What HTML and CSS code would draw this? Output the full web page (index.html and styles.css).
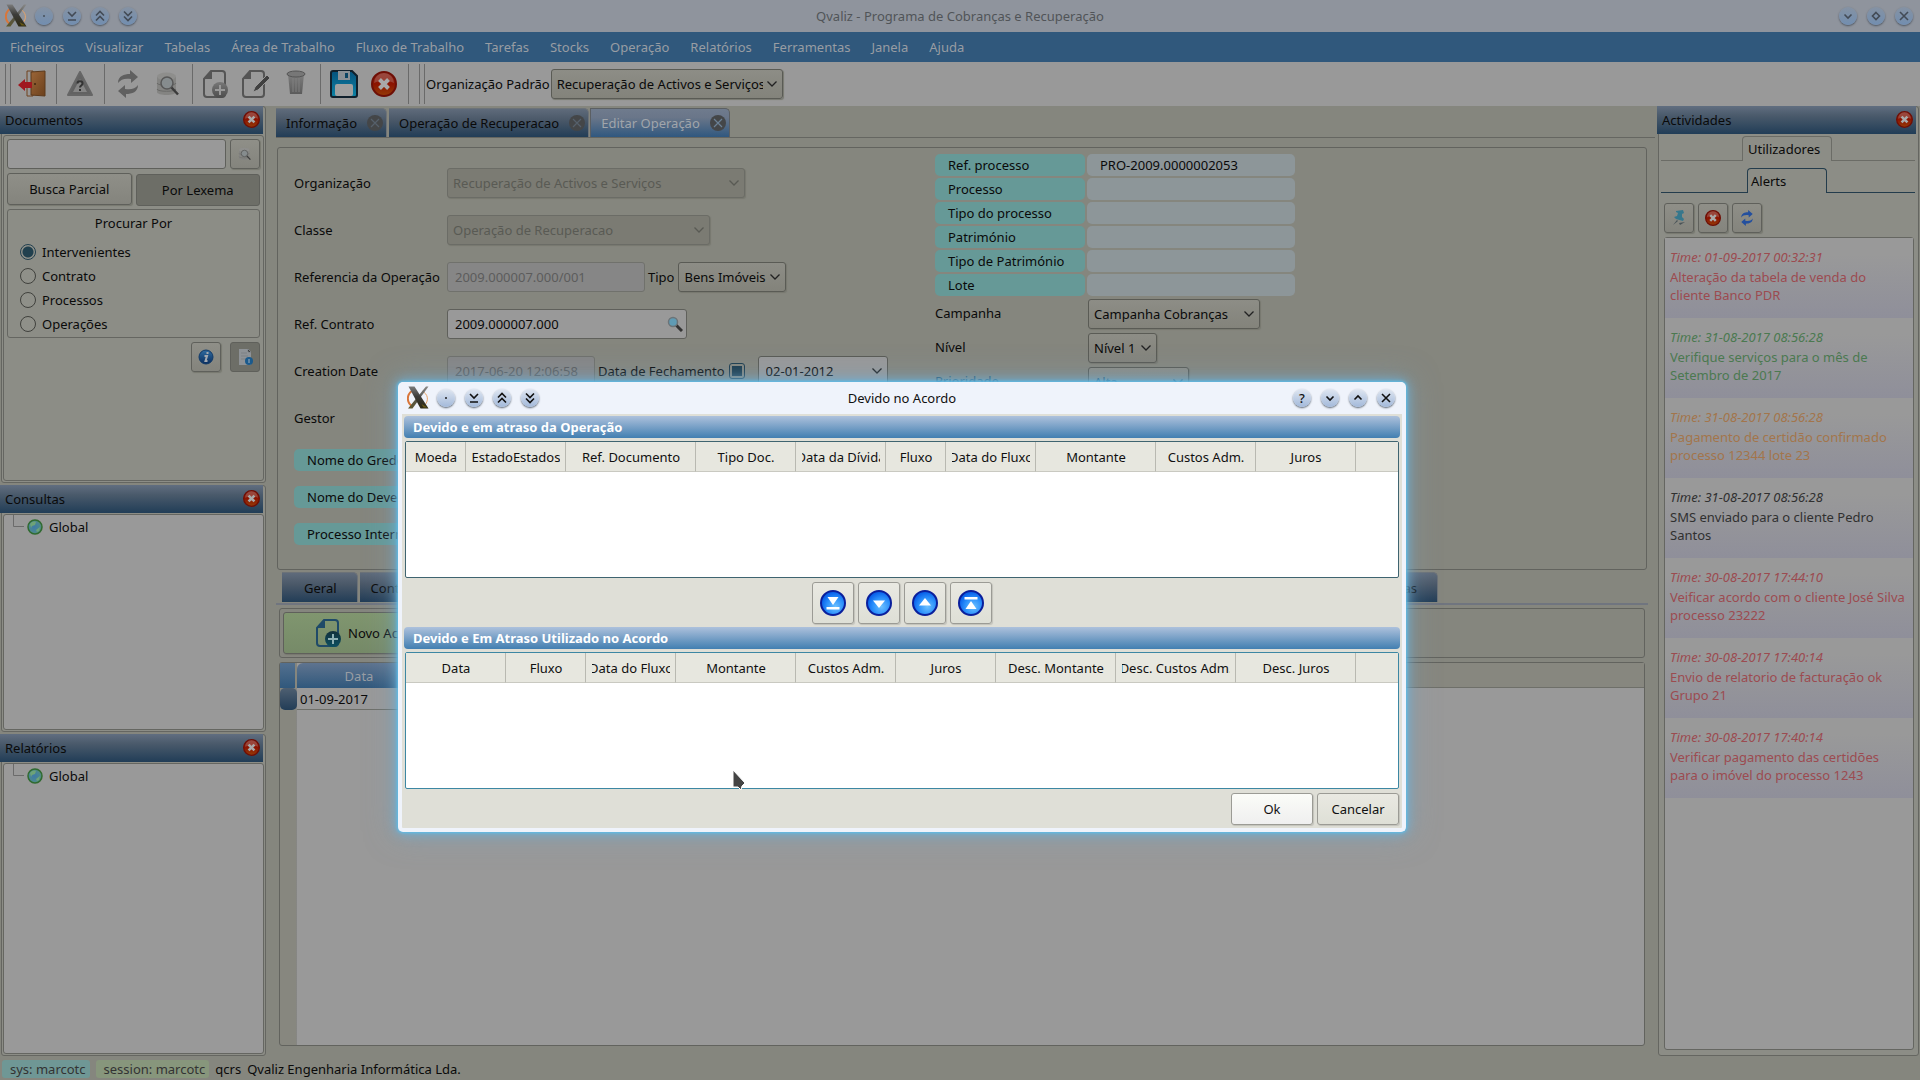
FILE: index.html
```html
<!DOCTYPE html>
<html lang="pt">
<head>
<meta charset="utf-8">
<title>Qvaliz - Programa de Cobranças e Recuperação</title>
<link rel="stylesheet" href="styles.css">
</head>
<body>
<svg class="sprite" width="0" height="0" aria-hidden="true">
  <defs>
    <linearGradient id="g-x" x1="0" y1="0" x2="0" y2="1"><stop offset="0" stop-color="#7b7b7b"/><stop offset=".45" stop-color="#3c3c3a"/><stop offset="1" stop-color="#2e2a14"/></linearGradient>
    <linearGradient id="g-x2" x1="1" y1="0" x2="0" y2="1"><stop offset="0" stop-color="#8b8b8b"/><stop offset=".5" stop-color="#55554f"/><stop offset="1" stop-color="#5e5628"/></linearGradient>
    <linearGradient id="g-door" x1="0" y1="0" x2="1" y2="1"><stop offset="0" stop-color="#9c6638"/><stop offset="1" stop-color="#6b401c"/></linearGradient>
    <linearGradient id="g-red" x1="0" y1="0" x2="0" y2="1"><stop offset="0" stop-color="#8a2a20"/><stop offset=".5" stop-color="#8c1300"/><stop offset="1" stop-color="#943c08"/></linearGradient>
    <linearGradient id="g-grey" x1="0" y1="0" x2="0" y2="1"><stop offset="0" stop-color="#777"/><stop offset="1" stop-color="#4c4c4c"/></linearGradient>
    <linearGradient id="g-save" x1="0" y1="0" x2="0" y2="1"><stop offset="0" stop-color="#05517c"/><stop offset="1" stop-color="#0d84a6"/></linearGradient>
    <linearGradient id="g-info" x1="0" y1="0" x2="0" y2="1"><stop offset="0" stop-color="#2f6ba0"/><stop offset="1" stop-color="#0a2d5e"/></linearGradient>
    <radialGradient id="g-globe" cx=".45" cy=".5" r=".6"><stop offset="0" stop-color="#3f7aa6"/><stop offset=".6" stop-color="#4a8692"/><stop offset="1" stop-color="#5b9160"/></radialGradient>
    <radialGradient id="g-move" cx=".6" cy=".65" r=".6"><stop offset="0" stop-color="#6cc0ff"/><stop offset=".6" stop-color="#2a8ffb"/><stop offset="1" stop-color="#0a62ea"/></radialGradient>
    <linearGradient id="g-dark" x1="0" y1="0" x2="0" y2="1"><stop offset="0" stop-color="#12303c"/><stop offset="1" stop-color="#0d5060"/></linearGradient>
  </defs>
  <symbol id="i-app" viewBox="0 0 22 24">
    <path d="M5 5C-1 9 0 17 5 20" fill="none" stroke="#d9763a" stroke-width="2"/>
    <path d="M15 5c6 3 7 9 3 14" fill="none" stroke="#e9a468" stroke-width="1"/>
    <path d="M19 0.500h2.500L5.500 22.500H1z" fill="url(#g-x2)"/>
    <path d="M1.500 0.500h6L21.500 22.500h-8z" fill="url(#g-x)"/>
    <path d="M14.500 18l2 3.500h4z" fill="#8a7410" opacity=".6"/>
  </symbol>
  <symbol id="i-dot" viewBox="0 0 18 18"><rect x="8" y="8" width="2" height="2" fill="currentColor" opacity=".7"/></symbol>
  <symbol id="i-bottom" viewBox="0 0 18 18"><path d="M5 5l4 4 4-4M5 13h8" class="ln"/></symbol>
  <symbol id="i-up2" viewBox="0 0 18 18"><path d="M5 8.500l4-4 4 4M5 13.500l4-4 4 4" class="ln"/></symbol>
  <symbol id="i-down2" viewBox="0 0 18 18"><path d="M5 4.500l4 4 4-4M5 9.500l4 4 4-4" class="ln"/></symbol>
  <symbol id="i-down" viewBox="0 0 18 18"><path d="M5.500 7.500L9 11l3.500-3.500" class="ln"/></symbol>
  <symbol id="i-up" viewBox="0 0 18 18"><path d="M5.500 10.500L9 7l3.500 3.500" class="ln"/></symbol>
  <symbol id="i-diamond" viewBox="0 0 18 18"><path d="M9 5.500L12.500 9 9 12.500 5.500 9z" class="ln"/></symbol>
  <symbol id="i-close" viewBox="0 0 18 18"><path d="M5 5l8 8M13 5l-8 8" class="ln"/></symbol>
  <symbol id="i-chev" viewBox="0 0 10 6"><path d="M.5.5L5 5 9.500.5" fill="none" stroke="currentColor" stroke-width="1.300"/></symbol>
  <symbol id="i-redx" viewBox="0 0 26 26">
    <circle cx="13" cy="13" r="12" fill="url(#g-red)" stroke="#6e0f06" stroke-width="2"/>
    <path d="M3 12a10 10 0 0 1 20 0c-6-3-14-3-20 0z" fill="#a86a62" opacity=".5"/>
    <path d="M8.500 8.500l9 9M17.500 8.500l-9 9" stroke="#a9a9a9" stroke-width="4"/>
  </symbol>
  <symbol id="i-tabx" viewBox="0 0 16 16"><circle cx="8" cy="8" r="8" fill="#444648"/><path d="M4 4l8 8M12 4l-8 8" stroke="currentColor" stroke-width="1.200"/></symbol>
  <symbol id="i-globe" viewBox="0 0 16 16"><circle cx="8" cy="8" r="7" fill="url(#g-globe)" stroke="#2f6a30" stroke-width="1.500"/><path d="M3 5c2-3 5-3 6-2L8 6 5 7 4 9zM9 11l4-3-1 4-2 1z" fill="#6ea377"/></symbol>
  <symbol id="i-find" viewBox="0 0 24 26">
    <path d="M1 6v15c0 4 19 4 19 0V6z" fill="#848482"/><ellipse cx="10.500" cy="5.500" rx="9.500" ry="4" fill="#8e8e8c"/>
    <path d="M1 12c0 3 19 3 19 0M1 18c0 3 19 3 19 0" fill="none" stroke="#6a6a68"/>
    <circle cx="11" cy="12" r="6" fill="#868c8e" stroke="#585858" stroke-width="1.500"/><path d="M15.500 16.500l6.500 7" stroke="#3c3c3c" stroke-width="2.500"/>
  </symbol>
  <symbol id="i-doc" viewBox="0 0 26 28">
    <path d="M8 1h11a3 3 0 0 1 3 3v20a3 3 0 0 1-3 3H4a3 3 0 0 1-3-3V9z" fill="none" stroke="currentColor" stroke-width="2"/><path d="M9 1v8H1z" fill="currentColor"/>
  </symbol>
</svg>

<div class="app">
  <header class="titlebar">
    <div class="group">
      <svg class="logo"><use href="#i-app"/></svg>
      <button class="round" aria-label="Menu"><svg><use href="#i-dot"/></svg></button>
      <button class="round" aria-label="Em baixo"><svg><use href="#i-bottom"/></svg></button>
      <button class="round" aria-label="Acima"><svg><use href="#i-up2"/></svg></button>
      <button class="round" aria-label="Abaixo"><svg><use href="#i-down2"/></svg></button>
    </div>
    <h1>Qvaliz - Programa de Cobranças e Recuperação</h1>
    <div class="group end">
      <button class="round" aria-label="Minimizar"><svg><use href="#i-down"/></svg></button>
      <button class="round" aria-label="Restaurar"><svg><use href="#i-diamond"/></svg></button>
      <button class="round" aria-label="Fechar"><svg><use href="#i-close"/></svg></button>
    </div>
  </header>

  <nav class="menubar">
    <a href="#">Ficheiros</a><a href="#">Visualizar</a><a href="#">Tabelas</a><a href="#">Área de Trabalho</a><a href="#">Fluxo de Trabalho</a><a href="#">Tarefas</a><a href="#">Stocks</a><a href="#">Operação</a><a href="#">Relatórios</a><a href="#">Ferramentas</a><a href="#">Janela</a><a href="#">Ajuda</a>
  </nav>

  <div class="toolbar">
    <span class="grip"></span>
    <button aria-label="Sair"><svg width="28" height="28" viewBox="0 0 28 28"><path d="M9 1h6v25H9z" fill="#999" stroke="#70431f"/><path d="M13 2l14-1v25l-14-1z" fill="url(#g-door)" stroke="#5d3a1c"/><circle cx="17" cy="14" r="1" fill="#3c2410"/><path d="M0 15l7-6v3h7v6H7v3z" fill="#a01820"/></svg></button>
    <span class="sep"></span>
    <button aria-label="Aviso"><svg width="26" height="26" viewBox="0 0 26 26"><path d="M13 1l12 23H1z" fill="#626262" stroke="#666" stroke-width="2" stroke-linejoin="round"/><path d="M13 8l7 13H6z" fill="#858585"/><path d="M10.500 12.500c0-3 5-3 5 0 0 2-2.500 2-2.500 4M13 18v2" fill="none" stroke="#333" stroke-width="2"/></svg></button>
    <span class="sep"></span>
    <button aria-label="Actualizar"><svg width="22" height="28" viewBox="0 0 22 28"><path d="M1 13C1 6 7 4 13 4V0l8 7-7 6V9C8 8 4 9 1 13zM21 15c0 7-6 9-12 9v4l-8-7 7-6v4c6 1 10 0 13-4z" fill="#606060"/></svg></button>
    <button aria-label="Pesquisar"><svg width="24" height="26"><use href="#i-find"/></svg></button>
    <span class="sep"></span>
    <button aria-label="Novo"><svg width="26" height="28" viewBox="0 0 26 28" color="#555"><use href="#i-doc"/><circle cx="17" cy="20" r="8" fill="url(#g-grey)"/><path d="M17 15v10M12 20h10" stroke="#999" stroke-width="2"/></svg></button>
    <button aria-label="Editar"><svg width="28" height="28" viewBox="0 0 28 28" color="#555"><svg width="26" height="28"><use href="#i-doc"/></svg><path d="M11 22l2-5L25 5l3 3-12 12z" fill="#404040" stroke="#999"/></svg></button>
    <button aria-label="Apagar"><svg width="20" height="28" viewBox="0 0 20 28"><path d="M2 4h16l-2 20H4z" fill="url(#g-grey)" opacity=".8"/><ellipse cx="10" cy="4" rx="9" ry="3" fill="#777" stroke="#555"/><path d="M7 8v14M10 8v14M13 8v14" stroke="#808080"/></svg></button>
    <span class="sep"></span>
    <button aria-label="Guardar"><svg width="28" height="28" viewBox="0 0 28 28"><path d="M3 1h19l5 5v19a2 2 0 0 1-2 2H3a2 2 0 0 1-2-2V3a2 2 0 0 1 2-2z" fill="url(#g-save)" stroke="#10202c" stroke-width="2"/><path d="M8 1h12v9H8z" fill="#8b9196"/><path d="M15 3h3v5h-3z" fill="#0c4564"/><rect x="5" y="14" width="18" height="12" rx="2" fill="#a0a0a0"/></svg></button>
    <button aria-label="Cancelar operação"><svg width="26" height="26"><use href="#i-redx"/></svg></button>
    <span class="sep"></span>
    <span class="grip second"></span>
    <label for="org-padrao">Organização Padrão</label>
    <span class="combo w-232"><select id="org-padrao"><option>Recuperação de Activos e Serviços</option></select><svg><use href="#i-chev"/></svg></span>
  </div>

  <div class="work">
    <aside class="dock left">
      <section class="panel">
        <h2>Documentos<button aria-label="Fechar Documentos"><svg><use href="#i-redx"/></svg></button></h2>
        <div class="frame search">
          <div class="row"><input class="field grow" type="text" aria-label="Procurar documentos"><button class="btn sq" aria-label="Procurar"><svg width="14" height="14"><use href="#i-find"/></svg></button></div>
          <div class="row modes"><button class="btn grow">Busca Parcial</button><button class="btn grow pressed">Por Lexema</button></div>
          <fieldset>
            <legend>Procurar Por</legend>
            <label><input type="radio" name="by" checked>Intervenientes</label>
            <label><input type="radio" name="by">Contrato</label>
            <label><input type="radio" name="by">Processos</label>
            <label><input type="radio" name="by">Operações</label>
          </fieldset>
          <div class="row infos">
            <button class="btn sq" aria-label="Informação"><svg width="16" height="16" viewBox="0 0 16 16"><circle cx="8" cy="8" r="7" fill="url(#g-info)" stroke="#113a68"/><path d="M9.500 3v2M6.500 7h2.500l-1.500 5h2" stroke="#a4a9b0" stroke-width="2" fill="none"/></svg></button>
            <button class="btn sq pressed" aria-label="Detalhe do documento"><svg width="16" height="16" viewBox="0 0 16 16"><path d="M2 0h9l3 3v13H2z" fill="#8e9296"/><path d="M11 0l3 3h-3zM4 4h6M4 7h7M4 10h5" stroke="#7c8084"/><circle cx="12" cy="12" r="4" fill="#1b5a8c"/><path d="M12 10v4" stroke="#a0b0c0"/></svg></button>
          </div>
        </div>
      </section>
      <section class="panel">
        <h2>Consultas<button aria-label="Fechar Consultas"><svg><use href="#i-redx"/></svg></button></h2>
        <div class="frame tree"><a href="#"><svg class="branch" viewBox="0 0 12 24"><path d="M.5 0v11.500H11" fill="none" stroke="#6b6b6b"/></svg><svg class="globe"><use href="#i-globe"/></svg>Global</a></div>
      </section>
      <section class="panel">
        <h2>Relatórios<button aria-label="Fechar Relatórios"><svg><use href="#i-redx"/></svg></button></h2>
        <div class="frame tree"><a href="#"><svg class="branch" viewBox="0 0 12 24"><path d="M.5 0v11.500H11" fill="none" stroke="#6b6b6b"/></svg><svg class="globe"><use href="#i-globe"/></svg>Global</a></div>
      </section>
    </aside>

    <main>
      <div class="tabs">
        <button class="tab">Informação<svg><use href="#i-tabx"/></svg></button>
        <button class="tab">Operação de Recuperacao<svg><use href="#i-tabx"/></svg></button>
        <button class="tab active">Editar Operação<svg><use href="#i-tabx"/></svg></button>
      </div>

      <form class="operation">
        <div class="fields">
          <div class="line"><label for="org">Organização</label><span class="combo w-298"><select id="org" disabled><option>Recuperação de Activos e Serviços</option></select><svg><use href="#i-chev"/></svg></span></div>
          <div class="line"><label for="classe">Classe</label><span class="combo w-263"><select id="classe" disabled><option>Operação de Recuperacao</option></select><svg><use href="#i-chev"/></svg></span></div>
          <div class="line"><label for="refop">Referencia da Operação</label><input class="field w-198" id="refop" disabled value="2009.000007.000/001"><label class="inner" for="tipo">Tipo</label><span class="combo w-108"><select id="tipo"><option>Bens Imóveis</option></select><svg><use href="#i-chev"/></svg></span></div>
          <div class="line"><label for="refct">Ref. Contrato</label><span class="lookup"><input class="field" id="refct" value="2009.000007.000"><svg viewBox="0 0 16 16"><path d="M9 9l6 6" stroke="#333" stroke-width="3"/><circle cx="6" cy="6" r="4.500" fill="#5f9bb4" stroke="#6c7478" stroke-width="1.500"/></svg></span></div>
          <div class="line"><label for="criado">Creation Date</label><input class="field w-148" id="criado" disabled value="2017-06-20 12:06:58"><label class="inner" for="fecho">Data de Fechamento</label><input type="checkbox" id="fecho" checked><span class="combo date w-130"><select aria-label="Data"><option>02-01-2012</option></select><svg><use href="#i-chev"/></svg></span></div>
          <div class="line"><span>Gestor</span></div>
          <div class="names"><span class="chip">Nome do Gredor</span><span class="chip">Nome do Devedor</span><span class="chip">Processo Interno</span></div>
        </div>
        <div class="side">
          <div class="pairs">
            <span class="chip">Ref. processo</span><span class="chip value">PRO-2009.0000002053</span>
            <span class="chip">Processo</span><span class="chip value"></span>
            <span class="chip">Tipo do processo</span><span class="chip value"></span>
            <span class="chip">Património</span><span class="chip value"></span>
            <span class="chip">Tipo de Património</span><span class="chip value"></span>
            <span class="chip">Lote</span><span class="chip value"></span>
          </div>
          <div class="choices">
            <label for="camp">Campanha</label><span class="combo w-172"><select id="camp"><option>Campanha Cobranças</option></select><svg><use href="#i-chev"/></svg></span>
            <label for="nivel">Nível</label><span class="combo w-69"><select id="nivel"><option>Nível 1</option></select><svg><use href="#i-chev"/></svg></span>
            <label class="off" for="prio">Prioridade</label><span class="combo tinted w-101"><select id="prio"><option>Alta</option></select><svg><use href="#i-chev"/></svg></span>
          </div>
        </div>
      </form>

      <div class="tabs lower">
        <button class="tab">Geral</button>
        <button class="tab grow">Contrato</button>
        <button class="tab">Notas</button>
      </div>
      <div class="actions"><button class="btn new"><svg width="26" height="28" viewBox="0 0 26 28" color="#1f4a68"><use href="#i-doc"/><circle cx="17" cy="20" r="8" fill="url(#g-dark)"/><path d="M17 15v10M12 20h10" stroke="#8fb0b4" stroke-width="2"/></svg>Novo Acordo</button></div>
      <div class="grid-box">
        <table class="agreements">
          <thead><tr><th class="corner"></th><th class="date">Data</th><th class="rest"></th></tr></thead>
          <tbody><tr><th class="mark"></th><td>01-09-2017</td><td class="rest"></td></tr></tbody>
        </table>
      </div>
    </main>

    <aside class="dock right">
      <section class="panel">
        <h2>Actividades<button aria-label="Fechar Actividades"><svg><use href="#i-redx"/></svg></button></h2>
        <div class="notch users"><button>Utilizadores</button></div>
        <div class="notch alerts"><button>Alerts</button></div>
        <div class="row tools">
          <button class="btn sq" aria-label="Fixar"><svg width="14" height="16" viewBox="0 0 14 16"><path d="M4 1l7-1 1 3-2 1v3l2 2-1 2-7-2-2-2 3-1 1-3-2-1z" fill="#36778c"/><path d="M5 10l-4 5 5-4zM7 13l6-1-5 3z" fill="#4a5458"/></svg></button>
          <button class="btn sq" aria-label="Remover"><svg width="16" height="16"><use href="#i-redx"/></svg></button>
          <button class="btn sq" aria-label="Actualizar alertas"><svg width="14" height="16" viewBox="0 0 22 28"><path d="M1 13C1 6 7 4 13 4V0l8 7-7 6V9C8 8 4 9 1 13zM21 15c0 7-6 9-12 9v4l-8-7 7-6v4c6 1 10 0 13-4z" fill="#234f9e"/></svg></button>
        </div>
        <ul class="feed">
          <li class="red"><em>Time: 01-09-2017 00:32:31</em>Alteração da tabela de venda do cliente Banco PDR</li>
          <li class="green"><em>Time: 31-08-2017 08:56:28</em>Verifique serviços para o mês de Setembro de 2017</li>
          <li class="orange"><em>Time: 31-08-2017 08:56:28</em>Pagamento de certidão confirmado processo 12344 lote 23</li>
          <li><em>Time: 31-08-2017 08:56:28</em>SMS enviado para o cliente Pedro Santos</li>
          <li class="red"><em>Time: 30-08-2017 17:44:10</em>Veificar acordo com o cliente José Silva processo 23222</li>
          <li class="red"><em>Time: 30-08-2017 17:40:14</em>Envio de relatorio de facturação ok Grupo 21</li>
          <li class="red"><em>Time: 30-08-2017 17:40:14</em>Verificar pagamento das certidões para o imóvel do processo 1243</li>
        </ul>
      </section>
    </aside>
  </div>

  <footer class="status"><span class="who sys">sys: marcotc</span><span class="who session">session: marcotc</span><span>qcrs</span><span>Qvaliz Engenharia Informática Lda.</span></footer>
</div>

<div class="window" role="dialog" aria-labelledby="dlg-title">
  <header class="titlebar">
    <div class="group">
      <svg class="logo"><use href="#i-app"/></svg>
      <button class="round" aria-label="Menu"><svg><use href="#i-dot"/></svg></button>
      <button class="round" aria-label="Em baixo"><svg><use href="#i-bottom"/></svg></button>
      <button class="round" aria-label="Acima"><svg><use href="#i-up2"/></svg></button>
      <button class="round" aria-label="Abaixo"><svg><use href="#i-down2"/></svg></button>
    </div>
    <h1 id="dlg-title">Devido no Acordo</h1>
    <div class="group end">
      <button class="round help" aria-label="Ajuda">?</button>
      <button class="round" aria-label="Minimizar"><svg><use href="#i-down"/></svg></button>
      <button class="round" aria-label="Maximizar"><svg><use href="#i-up"/></svg></button>
      <button class="round" aria-label="Fechar"><svg><use href="#i-close"/></svg></button>
    </div>
  </header>
  <div class="content">
    <h2 class="bar">Devido e em atraso da Operação</h2>
    <div class="sheet first">
      <table>
        <colgroup><col class="w-60"><col class="w-100"><col class="w-130"><col class="w-100"><col class="w-90"><col class="w-60"><col class="w-90"><col class="w-120"><col class="w-100"><col class="w-100"><col></colgroup>
        <thead><tr><th><div>Moeda</div></th><th><div>EstadoEstados</div></th><th><div>Ref. Documento</div></th><th><div>Tipo Doc.</div></th><th><div>Data da Dívida</div></th><th><div>Fluxo</div></th><th><div>Data do Fluxo</div></th><th><div>Montante</div></th><th><div>Custos Adm.</div></th><th><div>Juros</div></th><th></th></tr></thead>
      </table>
    </div>
    <div class="movers">
      <button class="btn" aria-label="Mover tudo para baixo"><svg width="26" height="26" viewBox="0 0 26 26"><circle cx="13" cy="13" r="12" fill="url(#g-move)" stroke="#0a1f9c" stroke-width="2"/><path d="M7.500 7h11L13 15zM6.500 17h13v2.500h-13z" fill="#fff"/></svg></button>
      <button class="btn" aria-label="Mover para baixo"><svg width="26" height="26" viewBox="0 0 26 26"><circle cx="13" cy="13" r="12" fill="url(#g-move)" stroke="#0a1f9c" stroke-width="2"/><path d="M7 10.500h12L13 18z" fill="#fff"/></svg></button>
      <button class="btn" aria-label="Mover para cima"><svg width="26" height="26" viewBox="0 0 26 26"><circle cx="13" cy="13" r="12" fill="url(#g-move)" stroke="#0a1f9c" stroke-width="2"/><path d="M7 15.500h12L13 8z" fill="#fff"/></svg></button>
      <button class="btn" aria-label="Mover tudo para cima"><svg width="26" height="26" viewBox="0 0 26 26"><circle cx="13" cy="13" r="12" fill="url(#g-move)" stroke="#0a1f9c" stroke-width="2"/><path d="M7.500 19h11L13 11zM6.500 7h13v2.500h-13z" fill="#fff"/></svg></button>
    </div>
    <h2 class="bar">Devido e Em Atraso Utilizado no Acordo</h2>
    <div class="sheet">
      <table>
        <colgroup><col class="w-100"><col class="w-80"><col class="w-90"><col class="w-120"><col class="w-100"><col class="w-100"><col class="w-120"><col class="w-120"><col class="w-120"><col></colgroup>
        <thead><tr><th><div>Data</div></th><th><div>Fluxo</div></th><th><div>Data do Fluxo</div></th><th><div>Montante</div></th><th><div>Custos Adm.</div></th><th><div>Juros</div></th><th><div>Desc. Montante</div></th><th><div>Desc. Custos Adm.</div></th><th><div>Desc. Juros</div></th><th></th></tr></thead>
      </table>
    </div>
    <div class="confirm"><button class="btn ok">Ok</button><button class="btn">Cancelar</button></div>
  </div>
  <svg class="pointer" viewBox="0 0 14 22"><path d="M1 1v17h5l3 3 1-4 3-3z" fill="#444" stroke="#fff" stroke-width="1"/></svg>
</div>
</body>
</html>
```
FILE: styles.css
```css
* { box-sizing: border-box; }
html, body { height: 100%; }
body { margin: 0; background: #85867e; color: #0a0a0a; font: 13px/18px "Noto Sans", sans-serif; overflow: hidden; }
button, input, select { font: inherit; color: inherit; margin: 0; padding: 0; }
button { background: none; border: 0; display: flex; align-items: center; justify-content: center; }
h1, h2 { margin: 0; font-size: 13px; font-weight: 400; }
a { color: inherit; text-decoration: none; }
svg { display: block; flex: none; }
.sprite { position: absolute; }
.ln { fill: none; stroke: currentColor; stroke-width: 1.6; }
.grow { flex: 1; }
.row { display: flex; }

.app { min-height: 100vh; display: grid; grid-template-rows: 32px 30px 44px minmax(0, 1fr) 23px; }

/* window title bars */
.titlebar { display: grid; grid-template-columns: 1fr auto 1fr; align-items: center; height: 32px; background: #8f949d; color: #515458; }
.titlebar .group { display: flex; align-items: center; gap: 10px; padding-left: 5px; }
.titlebar .end { justify-content: flex-end; padding: 0 7px 0 0; }
.logo { width: 22px; height: 24px; margin-right: -2px; }
.round { width: 18px; height: 18px; border-radius: 50%; color: #434b56; background: linear-gradient(#8592a3, #728eb0); box-shadow: 0 1px 2px #4a525e; }
.round svg { width: 18px; height: 18px; }

.menubar { display: flex; align-items: center; gap: 21px; padding-left: 10px; background: #30587c; color: #989da3; }

.toolbar { display: flex; align-items: center; background: #999; }
.toolbar button { width: 40px; height: 40px; }
.toolbar .sep { width: 8px; height: 40px; background: linear-gradient(#6a6a6a, #6a6a6a) center / 1px 100% no-repeat; }
.grip { width: 12px; height: 40px; padding: 0 3px 0 5px; }
.grip::before { content: ""; display: block; width: 4px; height: 40px; border: 1px solid #6a6a6a; border-width: 0 1px; }
.grip.second { width: 14px; padding-left: 7px; }
.toolbar .combo { margin-left: 1px; }

/* shared controls */
.btn { height: 30px; border: 1px solid #5f605b; border-radius: 3px; background: linear-gradient(#8f8f88, #84847d); box-shadow: 1px 1px 1px #77786f; }
.btn.sq { width: 30px; }
.btn.pressed { background: #6d6e67; box-shadow: none; }
.field { height: 30px; border: 1px solid #5f605b; border-radius: 3px; background: #999; padding: 0 7px; min-width: 0; }
.field:disabled { background: #868686; color: #5c5c5c; border-color: #70716c; }
.combo { display: inline-grid; align-items: center; }
.combo select { grid-area: 1 / 1; width: 100%; height: 30px; appearance: none; padding: 0 19px 0 5px; border: 1px solid #5a5b55; border-radius: 3px; background: linear-gradient(#8d8d86, #83837b); box-shadow: 1px 1px 1px #77786f; }
.combo svg { grid-area: 1 / 1; justify-self: end; width: 10px; height: 6px; margin-right: 6px; color: #222; pointer-events: none; }
.combo select:disabled { opacity: 1; background: #7b7b73; color: #595a54; border-color: #6b6c66; }
.combo select:disabled + svg { color: #595a54; }
.combo.date select { background: #999; box-shadow: none; padding-left: 7px; }
.combo.tinted { color: #1d4a63; }
.combo.tinted svg { color: #1d4a63; }
.w-60 { width: 60px; } .w-69 { width: 69px; } .w-80 { width: 80px; } .w-90 { width: 90px; }
.w-100 { width: 100px; } .w-101 { width: 101px; } .w-108 { width: 108px; } .w-120 { width: 120px; }
.w-130 { width: 130px; } .w-148 { width: 148px; } .w-172 { width: 172px; } .w-198 { width: 198px; }
.w-232 { width: 232px; } .w-263 { width: 263px; } .w-298 { width: 298px; }
.chip { height: 22px; padding: 2px 13px; border-radius: 5px; background: #669997; }
.chip.value { background: #8d9699; }

/* docks */
.work { display: grid; grid-template-columns: 266px minmax(0, 1fr) 263px; }
.dock { display: grid; gap: 2px; padding-bottom: 1px; }
.dock.left { grid-template-rows: 377fr 247fr 322fr; }
.panel { display: flex; flex-direction: column; margin-left: 1px; border: 1px solid #656661; border-radius: 3px; background: #8c8d86; }
.panel h2 { display: flex; justify-content: space-between; height: 28px; line-height: 28px; margin: -1px 2px 1px -2px; padding: 0 3px 0 5px; background: linear-gradient(#616e80, #4a5a6b 35%, #213d57); }
.panel h2 button { height: 26px; }
.panel h2 svg { width: 17px; height: 17px; }
.frame { flex: 1; margin: 0 1px 1px; border: 1px solid #656661; border-radius: 3px; }
.search { display: flex; flex-direction: column; padding: 3px; gap: 4px; }
.search > .row { gap: 4px; }
.search .modes .btn { height: 32px; }
.search .modes .pressed { margin: 1px 0 -1px; }
fieldset { margin: 0; padding: 4px 12px 1px; border: 1px solid #656661; border-radius: 3px; display: grid; }
legend { float: left; width: 100%; padding: 0; margin-bottom: 8px; text-align: center; }
fieldset label { display: flex; align-items: center; gap: 6px; height: 24px; }
input[type="radio"] { appearance: none; width: 16px; height: 16px; border: 1px solid #40413d; border-radius: 50%; background: #8f9089; }
input[type="radio"]:checked { border-color: #22404f; background: radial-gradient(#21404e 4px, #21404e 5px, #8f9089 6px); }
.search .infos { justify-content: flex-end; gap: 9px; }
.tree { background: #999; }
.tree a { display: flex; align-items: center; height: 24px; padding-left: 9px; }
.branch { width: 12px; height: 24px; margin-right: 2px; }
.globe { width: 16px; height: 16px; margin-right: 6px; }

.dock.right { padding-right: 1px; }
.notch { display: flex; margin: 1px 3px 7px 2px; color: #6b6c66; }
.notch::before, .notch::after { content: ""; border-bottom: 1px solid currentColor; }
.notch::before { width: 81px; }
.notch::after { flex: 1; }
.notch button { width: 90px; height: 25px; padding-left: 5px; justify-content: flex-start; color: #0a0a0a; border: 1px solid #6b6c66; border-bottom: 0; border-radius: 4px 4px 0 0; }
.notch.alerts { margin: 0 3px 10px 2px; color: #233c4c; }
.notch.alerts::before { width: 86px; }
.notch.alerts button { width: 80px; padding-left: 3px; border-color: #233c4c; }
.tools { gap: 4px; margin: 0 0 4px 5px; }
.feed { flex: 1; list-style: none; margin: 0 4px 5px 5px; padding: 0; border: 1px solid #656661; border-radius: 3px; background: #999; color: #303030; }
.feed li { height: 80px; padding: 9px 5px; background: linear-gradient(#999 20%, #8f8f9a); }
.feed em { display: block; line-height: 20px; margin-bottom: 1px; }
.feed .red { color: #9c4b50; }
.feed .green { color: #4b7950; }
.feed .orange { color: #a3754b; }

/* operation editor */
main { display: flex; flex-direction: column; padding: 2px 9px 11px 10px; }
.tabs { display: flex; gap: 2px; height: 30px; margin-right: -7px; border-bottom: 1px solid #656661; }
.tab { padding: 0 3px 0 10px; gap: 10px; background: linear-gradient(#5f6b7b, #4a5868 40%, #223d57); border: 1px solid #6c7278; border-width: 1px 1px 0 0; border-radius: 0 5px 0 0; }
.tab svg { width: 16px; height: 16px; color: #55606b; }
.tab.active { background: linear-gradient(#6f7b8d, #6a7689 30%, #30587f); color: #a0a5ab; border-width: 1px 1px 0; border-color: #5b5f63; margin-left: -1px; }
.tab.active svg { color: #6b8095; }
.operation { display: grid; grid-template-columns: 641px 1fr; margin: 9px 1px 0; height: 423px; padding: 6px 16px; border: 1px solid #62635e; border-radius: 3px; }
.fields { display: flex; flex-direction: column; gap: 17px; padding-top: 14px; }
.line { display: flex; align-items: center; height: 30px; }
.line > :first-child { width: 153px; }
.line .inner { margin: 0 4px 0 3px; }
.lookup { display: inline-grid; align-items: center; width: 240px; }
.lookup input { grid-area: 1 / 1; width: 100%; }
.lookup svg { grid-area: 1 / 1; justify-self: end; width: 16px; height: 16px; margin-right: 4px; }
input[type="checkbox"] { appearance: none; width: 16px; height: 16px; margin-right: 13px; border: 1px solid #1c3b4d; border-radius: 3px; background: #1c3b4d content-box; padding: 2px; }
.names { display: grid; grid-template-columns: 300px; gap: 15px; margin-top: -1px; }
.pairs { display: grid; grid-template-columns: 150px 208px; gap: 2px; }
.choices { display: grid; grid-template-columns: 153px 1fr; gap: 4px 0; margin-top: 3px; align-items: center; }
.choices label { margin-top: -2px; }
.choices .off { color: #1d4a63; }
.lower { margin: 2px 0 0; padding-left: 6px; padding-right: 210px; height: 33px; border-bottom: 2px solid #70757f; }
.lower .tab { padding: 0 20px 0 22px; height: 30px; justify-content: flex-start; border-left: 0; }
.lower .grow { padding-left: 11px; }
.actions { margin: 3px 3px 4px; padding: 3px; height: 50px; border: 1px solid #62635e; border-radius: 3px; }
.new { width: 220px; height: 42px; padding-left: 32px; gap: 6px; justify-content: flex-start; background: linear-gradient(#80966f, #768a68); }
.grid-box { flex: 1; margin: 0 3px; border: 1px solid #62635e; border-radius: 3px; background: linear-gradient(90deg, #87877f 16px, #74746e 16px, #999 17px); }
.agreements { width: 100%; border-spacing: 0; table-layout: fixed; }
.agreements th, .agreements td { padding: 0; height: 25px; font-weight: 400; text-align: left; }
.agreements .corner { width: 17px; background: linear-gradient(#53708f, #30587c); border-right: 2px solid #85867e; }
.agreements .date { width: 124px; text-align: center; color: #989da3; border-radius: 6px 0 0 0; background: linear-gradient(#5f748f, #30587c); }
.agreements th.rest { background: #87877f; border-bottom: 1px solid #6e6f69; }
.agreements td, .agreements .mark { height: 22px; }
.agreements td { padding-left: 3px; border-bottom: 1px solid #6e6f69; }
.agreements td.rest { border: 0; }
.agreements .mark { border-radius: 5px; background: linear-gradient(#4e5f71, #223d57); }

.status { display: flex; align-items: center; gap: 6px; padding: 1px 2px 0; }
.who { height: 18px; padding: 0 4px 0 8px; border-radius: 3px; color: #333; }
.sys { background: #6f9795; }
.session { background: #87967c; }

/* dialog window */
.window { position: absolute; left: 398px; top: 382px; width: 1008px; border: 4px solid #eff3fb; border-top: 0; border-radius: 5px; background: #dfdfd7; color: #101010; box-shadow: 0 0 3px 1px #5cbdea, 0 0 12px 2px rgba(105, 180, 222, .8), 0 0 30px 2px rgba(125, 165, 195, .5); }
.window .titlebar { background: #eff3fb; color: #101010; }
.window .round { color: #111; background: linear-gradient(#dfe6f1, #a3b9da); box-shadow: 0 1px 2px #56616f; }
.window .help { line-height: 18px; font-weight: 500; }
.content { padding: 2px 2px 3px; }
.bar { height: 22px; line-height: 22px; padding-left: 9px; border-radius: 4px; background: linear-gradient(#adc1dc, #427fb1); color: #fff; font-weight: 700; }
.sheet { height: 137px; margin: 3px 1px 4px; border: 1px solid #3d87a3; border-radius: 2px; background: #fff; }
.sheet.first { border-color: #3f6470; }
.sheet table { width: 100%; table-layout: fixed; border-spacing: 0; }
.sheet th { height: 30px; padding: 0 5px 0 6px; font-weight: 400; background: #e7e7df; border-right: 1px solid #b9b9b1; border-bottom: 1px solid #c9c9c1; }
.sheet th:last-child { border-right: 0; }
.sheet th div { display: flex; justify-content: center; overflow: hidden; white-space: nowrap; }
.window .btn { border-color: #9b9b95; background: linear-gradient(#e9e9e2, #dedfd6); box-shadow: 1px 1px 1px #c2c2bb; }
.movers { display: flex; justify-content: center; gap: 4px; margin-bottom: 3px; }
.window .movers .btn { width: 42px; height: 42px; }
.confirm { display: flex; justify-content: flex-end; gap: 4px; margin-right: 1px; }
.confirm .btn { width: 82px; height: 32px; }
.window .ok { background: linear-gradient(#fbfcf8, #efefef); }
.pointer { position: absolute; left: 330px; top: 387px; width: 14px; height: 22px; }
```
